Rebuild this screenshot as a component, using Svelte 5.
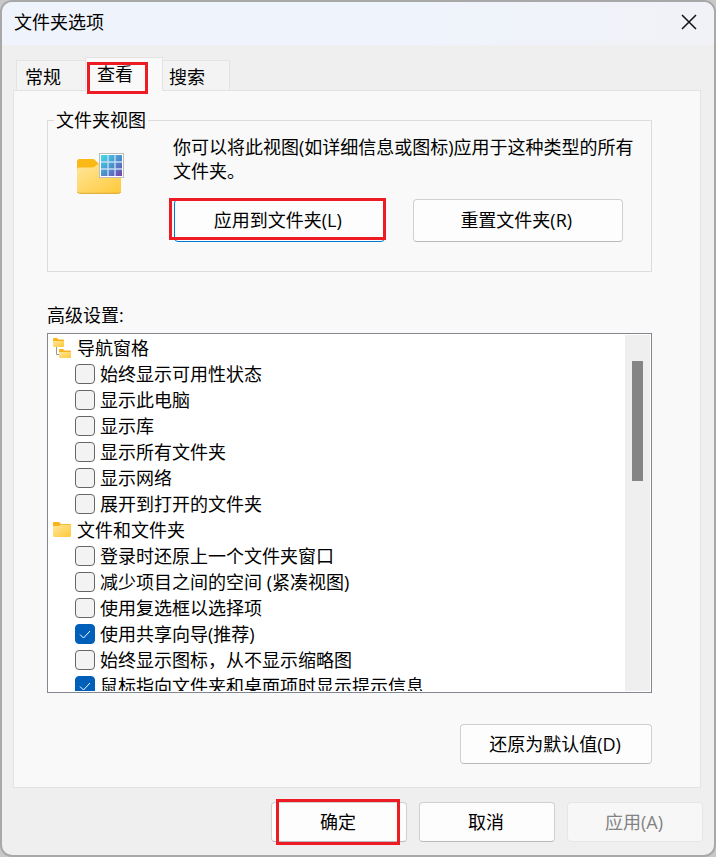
<script>
    const tabs = ['常规', '查看', '搜索']
    let active = $state('查看')

    let groups = $state([
        {
            name: '导航窗格',
            icon: 'tree',
            items: [
                {text: '始终显示可用性状态', on: false},
                {text: '显示此电脑', on: false},
                {text: '显示库', on: false},
                {text: '显示所有文件夹', on: false},
                {text: '显示网络', on: false},
                {text: '展开到打开的文件夹', on: false}
            ]
        },
        {
            name: '文件和文件夹',
            icon: 'folder',
            items: [
                {text: '登录时还原上一个文件夹窗口', on: false},
                {text: '减少项目之间的空间 (紧凑视图)', on: false},
                {text: '使用复选框以选择项', on: false},
                {text: '使用共享向导(推荐)', on: true},
                {text: '始终显示图标，从不显示缩略图', on: false},
                {text: '鼠标指向文件夹和桌面项时显示提示信息', on: true}
            ]
        }
    ])
</script>

<svg class="defs" aria-hidden="true">
    <defs>
        <linearGradient id="front" x1="0" y1="0" x2="1" y2="1">
            <stop offset="0" stop-color="#ffe69c"/>
            <stop offset="1" stop-color="#ffc937"/>
        </linearGradient>
        <linearGradient id="tiles" x1="0" y1="0" x2="1" y2="1">
            <stop offset="0" stop-color="#3fe0e8"/>
            <stop offset="0.5" stop-color="#4a94cf"/>
            <stop offset="1" stop-color="#7b3fae"/>
        </linearGradient>
    </defs>
</svg>

<div class="dialog" role="dialog" aria-labelledby="title">
    <header>
        <h1 id="title">文件夹选项</h1>
        <button class="close" aria-label="关闭">
            <svg width="16" height="16" viewBox="0 0 16 16">
                <path d="M1 1L15 15M15 1L1 15" stroke="#111" stroke-width="1.5" fill="none"/>
            </svg>
        </button>
    </header>

    <div class="tabs" role="tablist">
        {#each tabs as tab}
            <button class="tab" class:active={active === tab} role="tab" aria-selected={active === tab}
                    onclick={() => active = tab}>
                {tab}
                {#if tab === '查看'}<span class="mark mark-tab"></span>{/if}
            </button>
        {/each}
    </div>

    <main>
        <fieldset>
            <legend>文件夹视图</legend>
            <svg class="big" width="48" height="48" viewBox="0 0 48 48" aria-hidden="true">
                <path d="M1 8.500q0-2.500 2.500-2.500h13q1.500 0 2.500 1l4 4h19q3 0 3 3v10H1z" fill="#fbb917"/>
                <path d="M1 17q0-2.500 2.500-2.500H16q2 0 3.500-1.500l1.500-1.500h21q3 0 3 3V38q0 2.500-2.500 2.500h-39Q1 40.500 1 38z" fill="url(#front)"/>
                <path d="M1.500 39q.7 1.300 2 1.300h39q1.300 0 2-1.300" stroke="#dda52c" fill="none"/>
                <rect x="23.500" y="0.500" width="24" height="24" fill="#fff" stroke="#bcbcbc"/>
                <rect x="25" y="2" width="21" height="21" fill="url(#tiles)"/>
                <path d="M32 2v21M39 2v21M25 9h21M25 16h21" stroke="#c3dcf2" stroke-width="1.400"/>
            </svg>
            <div class="view">
                <p>你可以将此视图(如详细信息或图标)应用于这种类型的所有文件夹。</p>
                <div class="pair">
                    <button class="btn default">应用到文件夹(L)<span class="mark mark-apply"></span></button>
                    <button class="btn">重置文件夹(R)</button>
                </div>
            </div>
        </fieldset>

        <h2 id="advanced">高级设置:</h2>
        <div class="list">
            <ul aria-labelledby="advanced">
                {#each groups as group}
                    <li class="group">
                        {#if group.icon === 'tree'}
                            <svg width="20" height="20" viewBox="0 0 20 20" aria-hidden="true">
                                <path d="M4.500 9v7.500H8" stroke="#9a9a9a" fill="none"/>
                                <path d="M1 1q0-1 1-1h3l1.500 1.500H11q1 0 1 1V8H1z" fill="#f7b21c"/>
                                <path d="M1 3h11v5q0 1-1 1H2q-1 0-1-1z" fill="url(#front)"/>
                                <path d="M7 12q0-1 1-1h3l1.500 1.500H18q1 0 1 1V19H7z" fill="#f7b21c"/>
                                <path d="M7 14h12v5q0 1-1 1H8q-1 0-1-1z" fill="url(#front)"/>
                            </svg>
                        {:else}
                            <svg width="20" height="20" viewBox="0 0 20 20" aria-hidden="true">
                                <path d="M1 3q0-1 1-1h5l2 2h9q1 0 1 1v5H1z" fill="#f7b21c"/>
                                <path d="M1 7q0-1 1-1h5l1.500-1.300H18q1 0 1 1V16q0 1-1 1H2q-1 0-1-1z" fill="url(#front)"/>
                            </svg>
                        {/if}
                        {group.name}
                    </li>
                    {#each group.items as item}
                        <li class="item">
                            <label>
                                <span class="check">
                                    <input type="checkbox" bind:checked={item.on}>
                                    <svg width="20" height="20" viewBox="0 0 20 20" aria-hidden="true">
                                        <path d="M5 10.500L8.500 14L15 7" stroke="#fff" fill="none"/>
                                    </svg>
                                </span>
                                {item.text}
                            </label>
                        </li>
                    {/each}
                {/each}
            </ul>
            <div class="track">
                <div class="thumb"></div>
            </div>
        </div>

        <button class="btn restore">还原为默认值(D)</button>
    </main>

    <footer>
        <button class="btn">确定<span class="mark mark-ok"></span></button>
        <button class="btn">取消</button>
        <button class="btn" disabled>应用(A)</button>
    </footer>
</div>

<style>
    :global(body) {
        margin: 0;
        background: #c8c8c8;
    }

    * {
        box-sizing: border-box;
    }

    .defs {
        position: absolute;
        width: 0;
        height: 0;
    }

    .dialog {
        border: 2px solid #a8a8a8;
        border-radius: 12px;
        background: #efefef;
        overflow: hidden;
        color: #000;
        font: 18px/24px "Open Sans", "Noto Sans CJK SC", sans-serif;
    }

    header {
        display: flex;
        align-items: center;
        justify-content: space-between;
        height: 43px;
        padding: 0 17px 4px 12px;
        background: linear-gradient(90deg, #eff3fb 60%, #f1f2f7);
    }

    h1, h2 {
        margin: 0;
        font-size: 18px;
        font-weight: 400;
    }

    button {
        font: inherit;
        color: inherit;
        padding: 0;
    }

    .close {
        display: flex;
        border: 0;
        background: none;
    }

    .tabs {
        display: flex;
        align-items: flex-end;
        height: 45px;
        padding-left: 14px;
    }

    .tab {
        position: relative;
        height: 30px;
        padding: 3px 24px 0 8px;
        border: 1px solid #e3e3e3;
        border-bottom: 0;
        background: #f3f3f3;
        text-align: left;
    }

    .tab:first-child {
        border-right: 0;
    }

    .tab:last-child {
        padding-left: 6px;
        border-left: 0;
    }

    .tab.active {
        z-index: 1;
        height: 34px;
        margin-bottom: -1px;
        padding: 0 29px 2px 11px;
        background: #f9f9f9;
    }

    .mark {
        position: absolute;
        border: 3px solid #ed1c24;
        pointer-events: none;
    }

    .mark-tab {
        inset: 4px 14px -3px 1px;
    }

    .mark-apply {
        inset: -2px -2px 1px -6px;
    }

    .mark-ok {
        inset: -4px 6px -4px 4px;
    }

    main {
        display: flex;
        flex-direction: column;
        margin: 0 13px 0 11px;
        padding: 17px 48px 23px 33px;
        border: 1px solid #e3e3e3;
        background: #f9f9f9;
    }

    fieldset {
        display: flex;
        min-width: 0;
        margin: 0;
        padding: 3px 8px 29px 6px;
        border: 1px solid #dcdcdc;
    }

    legend {
        padding: 0 2px;
    }

    .big {
        flex: none;
        margin: 18px 49px 0 22px;
    }

    .view {
        flex: 1;
    }

    p {
        margin: 0 0 16px;
    }

    .pair {
        display: flex;
        gap: 28px;
        margin: 0 20px 0 1px;
    }

    .btn {
        position: relative;
        height: 40px;
        padding: 0 2px 0 0;
        border: 1px solid #d0d0d0;
        border-bottom-color: #bababa;
        border-radius: 4px;
        background: #fdfdfd;
    }

    .pair .btn {
        flex: 1;
        height: 43px;
        padding: 0 3px 2px 0;
    }

    .btn.default {
        border-color: #0078d4;
    }

    .btn:disabled {
        border-color: #e6e6e6;
        background: #f7f7f7;
        color: #838383;
    }

    h2 {
        margin: 31px 0 6px;
    }

    .list {
        display: flex;
        height: 360px;
        padding: 1px;
        border: 1px solid #828790;
        background: #fff;
    }

    ul {
        flex: 1;
        margin: 0;
        padding: 0;
        list-style: none;
        overflow-y: auto;
        scrollbar-width: none;
    }

    li {
        display: flex;
        align-items: center;
        height: 26px;
    }

    .group {
        gap: 5px;
        padding-left: 3px;
    }

    .item {
        padding-left: 26px;
    }

    label {
        display: flex;
        align-items: center;
        gap: 5px;
    }

    .check {
        display: grid;
    }

    .check > * {
        grid-area: 1 / 1;
    }

    .check svg {
        pointer-events: none;
    }

    input {
        appearance: none;
        width: 20px;
        height: 20px;
        margin: 0;
        border: 1px solid #666;
        border-radius: 4px;
        background: #f3f3f3;
    }

    input:checked {
        border-color: #005fb8;
        background: #005fb8;
    }

    input:not(:checked) + svg {
        visibility: hidden;
    }

    .track {
        width: 25px;
        padding: 26px 7px 0;
        background: #efefef;
    }

    .thumb {
        height: 120px;
        background: #858585;
    }

    .restore {
        align-self: flex-end;
        width: 192px;
        margin-top: 31px;
    }

    footer {
        display: flex;
        justify-content: flex-end;
        gap: 12px;
        padding: 14px 11px 13px;
    }

    footer .btn {
        width: 136px;
    }
</style>
